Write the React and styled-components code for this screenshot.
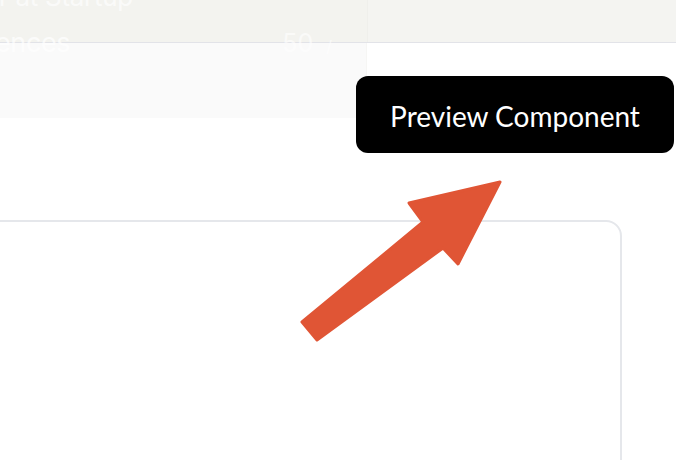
import React from 'react';
import styled, { createGlobalStyle } from 'styled-components';

const GlobalStyle = createGlobalStyle`
  html, body {
    margin: 0;
    padding: 0;
    background: #ffffff;
  }
  body {
    font-family: Lato, "Open Sans", sans-serif;
  }
`;

const App = () => {
  return (
    <Page>
      <GlobalStyle />
      <TopBar>
        <TitleCell>
          <FadedTitle>r at Startup</FadedTitle>
        </TitleCell>
        <SideCell />
      </TopBar>
      <SubRow>
        <InfoPanel>
          <FadedLabel>ences</FadedLabel>
          <FadedCount>
            50 <small>/</small>
          </FadedCount>
        </InfoPanel>
        <SideBlank />
      </SubRow>
      <CardArea>
        <Card />
      </CardArea>

      <Tooltip>Preview Component</Tooltip>
      <Arrow viewBox="0 0 676 460">
        <polygon
          points="500,182 409,203 423,222 302,322 317,340 443,248 458,264"
          fill="#e05535"
          stroke="#e05535"
          strokeWidth="3"
          strokeLinejoin="round"
        />
      </Arrow>
    </Page>
  );
};

const Page = styled.div`
  position: relative;
  width: 676px;
  height: 460px;
  overflow: hidden;
  background: #ffffff;
`;

const TopBar = styled.header`
  display: grid;
  grid-template-columns: 367px 1fr;
  height: 42px;
  background: #f3f3ef;
  border-bottom: 1px solid #e2e3e8;
`;

const TitleCell = styled.div`
  overflow: visible;
`;

const SideCell = styled.div`
  background: #f4f4f1;
  border-left: 1px solid #efefeb;
`;

const FadedTitle = styled.div`
  margin-top: -19px;
  margin-left: -1px;
  font-family: Inter, sans-serif;
  font-size: 26px;
  line-height: 32px;
  letter-spacing: -0.3px;
  color: rgba(255, 255, 255, 0.65);
  white-space: nowrap;
`;

const SubRow = styled.div`
  display: grid;
  grid-template-columns: 367px 1fr;
  height: 75px;
`;

const InfoPanel = styled.div`
  display: flex;
  justify-content: space-between;
  align-items: flex-start;
  background: #fafafa;
  padding-right: 34px;
  border-right: 1px solid #f6f6f4;
`;

const SideBlank = styled.div`
  background: #ffffff;
`;

const FadedLabel = styled.span`
  margin-top: -15px;
  margin-left: -5px;
  font-family: Inter, sans-serif;
  font-size: 27px;
  line-height: 29px;
  letter-spacing: -0.4px;
  color: rgba(255, 255, 255, 0.7);
`;

const FadedCount = styled.span`
  margin-top: -13px;
  font-family: Inter, sans-serif;
  font-size: 25px;
  line-height: 26px;
  color: rgba(255, 255, 255, 0.6);
  white-space: nowrap;

  small {
    font-size: 16px;
    margin-left: 6px;
  }
`;

const CardArea = styled.div`
  padding-top: 102px;
  margin-left: -20px;
`;

const Card = styled.div`
  width: 638px;
  height: 300px;
  border: 2px solid #e5e7eb;
  border-radius: 16px;
  background: #ffffff;
`;

const Tooltip = styled.div`
  position: absolute;
  left: 356px;
  top: 76px;
  width: 318px;
  height: 77px;
  display: flex;
  align-items: center;
  justify-content: center;
  background: #000000;
  color: #ffffff;
  border-radius: 12px;
  font-family: Lato, sans-serif;
  font-size: 28px;
  padding-top: 2px;
  box-sizing: border-box;
`;

const Arrow = styled.svg`
  position: absolute;
  left: 0;
  top: 0;
  width: 676px;
  height: 460px;
  pointer-events: none;
`;

export default App;
